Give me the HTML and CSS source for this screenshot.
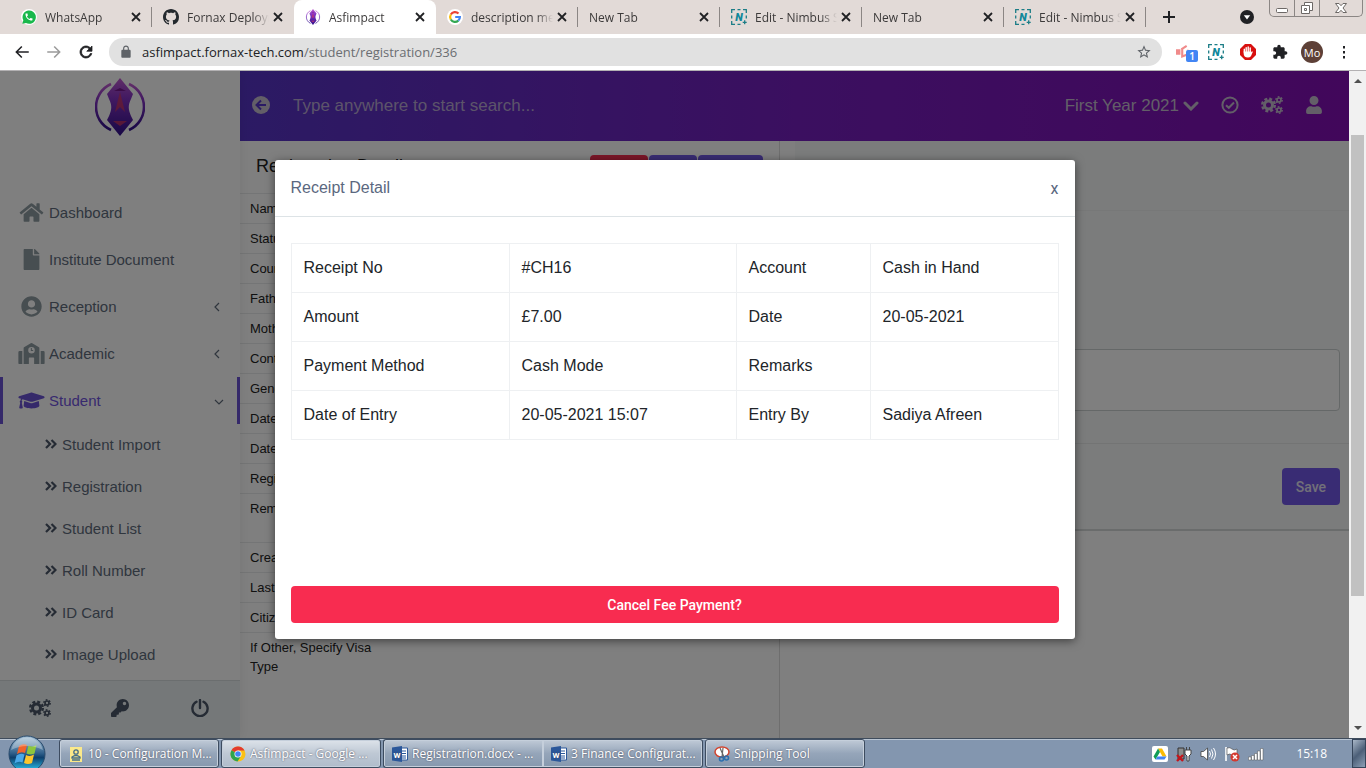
FILE: index.html
```
<!DOCTYPE html>
<html lang="en">
<head>
  <meta charset="UTF-8">
  <meta name="viewport" content="width=device-width, initial-scale=1.0">
  <title>Asfimpact</title>
  <link rel="stylesheet" href="styles.css">
</head>
<body>
  <!-- Shared icons -->
  <svg class="sprite" aria-hidden="true">
    <defs>
      <linearGradient id="logoFill" x1="0" y1="0" x2="0" y2="1">
        <stop offset="0" stop-color="#c05ad0"/>
        <stop offset="0.35" stop-color="#8434c4"/>
        <stop offset="1" stop-color="#30108c"/>
      </linearGradient>
      <linearGradient id="orbFill" x1="0" y1="0" x2="0" y2="1">
        <stop offset="0" stop-color="#a9c4d8"/>
        <stop offset="0.48" stop-color="#2f5f8a"/>
        <stop offset="0.6" stop-color="#0d3f6c"/>
        <stop offset="1" stop-color="#2fd0fa"/>
      </linearGradient>
    </defs>
    <symbol id="i-logo" viewBox="0 0 50 58">
      <path d="M25 0l13 16-2 5c-3 6-3 10 0 17l2 4-13 16-13-16 2-4c3-7 3-11 0-17l-2-5z" fill="url(#logoFill)"/>
      <path d="M25 14l5 20-5-5-5 5zM18 43h14l-7 5z" fill="#d2385f" opacity=".75"/>
      <path d="M19 13l6-3 6 3z" fill="#76198f"/>
      <path d="M16 6C-4 15-4 43 16 52M34 6c20 9 20 37 0 46" fill="none" stroke="url(#logoFill)" stroke-width="2.6"/>
    </symbol>
    <symbol id="i-close" viewBox="0 0 10 10"><path d="M1 1l8 8M9 1L1 9" stroke="currentColor" stroke-width="1.8"/></symbol>
    <symbol id="i-nimbus" viewBox="0 0 16 16">
      <path d="M.7 4V.7H4M6.5.7h3M12 .7h3.3V4M15.300 6.500v3M4 15.300H.7V12M.7 9.500v-3M6.500 15.300h3M13.700 11.300v4M11.700 13.300h4" fill="none" stroke="#1c7d86" stroke-width="1.3"/>
      <text x="8" y="12" text-anchor="middle" font-family="Roboto, sans-serif" font-size="11" font-weight="900" font-style="italic" fill="#11889a">N</text>
    </symbol>
    <symbol id="i-gears" viewBox="0 0 22 18">
      <g fill="none" stroke="currentColor">
        <circle cx="7.500" cy="9" r="4" stroke-width="3"/>
        <circle cx="7.500" cy="9" r="6.300" stroke-width="2.400" stroke-dasharray="2.900 2.048"/>
        <circle cx="18" cy="4" r="2" stroke-width="1.700"/>
        <circle cx="18" cy="4" r="3.200" stroke-width="1.400" stroke-dasharray="1.700 1.651"/>
        <circle cx="18" cy="14" r="2" stroke-width="1.700"/>
        <circle cx="18" cy="14" r="3.200" stroke-width="1.400" stroke-dasharray="1.700 1.651"/>
      </g>
    </symbol>
    <symbol id="i-dbl" viewBox="0 0 12 10"><path d="M1 1l4 4-4 4M6.500 1l4 4-4 4" fill="none" stroke="currentColor" stroke-width="2.200"/></symbol>
    <symbol id="i-left" viewBox="0 0 10 10"><path d="M7 1L3 5l4 4" fill="none" stroke="currentColor" stroke-width="1.200"/></symbol>
    <symbol id="i-word" viewBox="0 0 16 16">
      <path d="M8 2h7.500v12H8z" fill="#fff" stroke="#2b579a"/>
      <path d="M10 5h4M10 7.500h4M10 10h4M10 12h4" stroke="#2b579a"/>
      <path d="M0 1.500L10 0v16L0 14.500z" fill="#2b579a"/>
      <text x="5" y="11.500" text-anchor="middle" font-family="Roboto, sans-serif" font-size="8" font-weight="700" fill="#fff">W</text>
    </symbol>
  </svg>

  <!-- Browser tabs -->
  <header class="tabs">
    <div class="tab">
      <svg class="favicon" viewBox="0 0 24 24"><circle cx="12" cy="12" r="12" fill="#fff"/><path d="M2 22l1.500-5A10 10 0 1 1 7.500 21z" fill="#19b84c"/><path d="M6.620 10.790c1.440 2.830 3.760 5.140 6.590 6.590l2.200-2.200c.27-.27.67-.36 1.020-.24 1.120.37 2.330.57 3.570.57.55 0 1 .45 1 1V20c0 .55-.45 1-1 1-9.390 0-17-7.610-17-17 0-.55.45-1 1-1h3.500c.55 0 1 .45 1 1 0 1.250.2 2.450.57 3.570.11.35.03.74-.25 1.020l-2.200 2.200z" fill="#fff" transform="translate(5 5) scale(.58)"/></svg>
      <span class="tab-title">WhatsApp</span>
      <button class="tab-close" aria-label="Close"><svg><use href="#i-close"/></svg></button>
    </div>
    <div class="tab no-line">
      <svg class="favicon" viewBox="0 0 16 16"><path fill="#24292e" d="M8 0C3.580 0 0 3.580 0 8c0 3.540 2.290 6.530 5.470 7.590.4.07.55-.17.55-.38 0-.19-.01-.82-.01-1.490-2.010.37-2.530-.49-2.690-.94-.09-.23-.48-.94-.82-1.130-.28-.15-.68-.52-.01-.53.63-.01 1.080.58 1.230.82.72 1.210 1.870.87 2.330.66.07-.52.28-.87.51-1.070-1.780-.2-3.640-.89-3.640-3.950 0-.87.31-1.590.82-2.150-.08-.2-.36-1.020.08-2.120 0 0 .67-.21 2.200.82.64-.18 1.320-.27 2-.27s1.360.09 2 .27c1.530-1.040 2.200-.82 2.200-.82.44 1.100.16 1.920.08 2.120.51.56.82 1.270.82 2.150 0 3.070-1.870 3.750-3.650 3.950.29.25.54.73.54 1.480 0 1.070-.01 1.930-.01 2.200 0 .21.15.46.55.38A8.010 8.010 0 0 0 16 8c0-4.420-3.580-8-8-8z"/></svg>
      <span class="tab-title">Fornax Deployment</span>
      <button class="tab-close" aria-label="Close"><svg><use href="#i-close"/></svg></button>
    </div>
    <div class="tab active">
      <svg class="favicon"><use href="#i-logo"/></svg>
      <span class="tab-title">Asfimpact</span>
      <button class="tab-close" aria-label="Close"><svg><use href="#i-close"/></svg></button>
    </div>
    <div class="tab">
      <svg class="favicon" viewBox="0 0 16 16"><circle cx="8" cy="8" r="8" fill="#fff"/><g fill="none" stroke-width="2.200"><path d="M11.500 4.500A4.900 4.900 0 0 0 3.800 5.500" stroke="#ea4335"/><path d="M3.800 5.500a5 5 0 0 0 0 5" stroke="#fbbc05"/><path d="M3.800 10.500a4.900 4.900 0 0 0 7.500 1.100" stroke="#34a853"/><path d="M11.300 11.600A4.900 4.900 0 0 0 12.900 8H8.200" stroke="#4285f4"/></g></svg>
      <span class="tab-title">description meta</span>
      <button class="tab-close" aria-label="Close"><svg><use href="#i-close"/></svg></button>
    </div>
    <div class="tab">
      <span class="tab-title">New Tab</span>
      <button class="tab-close" aria-label="Close"><svg><use href="#i-close"/></svg></button>
    </div>
    <div class="tab">
      <svg class="favicon"><use href="#i-nimbus"/></svg>
      <span class="tab-title">Edit - Nimbus S</span>
      <button class="tab-close" aria-label="Close"><svg><use href="#i-close"/></svg></button>
    </div>
    <div class="tab">
      <span class="tab-title">New Tab</span>
      <button class="tab-close" aria-label="Close"><svg><use href="#i-close"/></svg></button>
    </div>
    <div class="tab">
      <svg class="favicon"><use href="#i-nimbus"/></svg>
      <span class="tab-title">Edit - Nimbus S</span>
      <button class="tab-close" aria-label="Close"><svg><use href="#i-close"/></svg></button>
    </div>
    <button class="new-tab" aria-label="New tab"><svg viewBox="0 0 12 12"><path d="M6 0v12M0 6h12" stroke="#202124" stroke-width="2"/></svg></button>
    <button class="tab-search" aria-label="Search tabs"><svg viewBox="0 0 14 14"><circle cx="7" cy="7" r="7" fill="#202124"/><path d="M3.800 5.200h6.400L7 9.500z" fill="#fff"/></svg></button>
    <div class="window-buttons">
      <button aria-label="Minimize"><svg viewBox="0 0 14 14"><rect x="1.500" y="7.500" width="11" height="4" rx="1" fill="#fff" stroke="#6c6866"/></svg></button>
      <button aria-label="Restore"><svg viewBox="0 0 14 14"><path d="M4.500 1.500h8v8h-3v3h-8v-8h3z" fill="#fff" stroke="#6c6866"/><path d="M4.500 4.500h5v5M4.500 7.500h2v2h-2z" fill="none" stroke="#6c6866"/></svg></button>
      <button class="win-close" aria-label="Close window"><svg viewBox="0 0 14 14"><path d="M1.500 2.500h3.500l2 2.200 2-2.200h3.500L9 7l3.500 4.500H9L7 9.300l-2 2.200H1.500L5 7z" fill="#fff" stroke="#6c6866"/></svg></button>
    </div>
  </header>

  <!-- Address bar -->
  <div class="toolbar">
    <button aria-label="Back"><svg viewBox="0 0 24 24"><path d="M21 11H6.800l5.700-5.600L11 4l-8 8 8 8 1.500-1.400L6.800 13H21z"/></svg></button>
    <button class="disabled" aria-label="Forward"><svg viewBox="0 0 24 24"><path d="M3 11h14.200l-5.700-5.600L13 4l8 8-8 8-1.500-1.400 5.700-5.600H3z"/></svg></button>
    <button aria-label="Reload"><svg viewBox="0 0 24 24"><path d="M17.650 6.350C16.200 4.900 14.210 4 12 4c-4.420 0-7.990 3.580-7.990 8s3.570 8 7.990 8c3.730 0 6.840-2.550 7.730-6h-2.080c-.82 2.330-3.040 4-5.650 4-3.310 0-6-2.690-6-6s2.690-6 6-6c1.660 0 3.140.69 4.220 1.780L13 11h7V4l-2.350 2.350z" stroke="#202124"/></svg></button>
    <div class="omnibox">
      <svg class="lock" viewBox="0 0 24 24"><path d="M18 8h-1V6c0-2.760-2.240-5-5-5S7 3.240 7 6v2H6c-1.100 0-2 .9-2 2v10c0 1.100.9 2 2 2h12c1.100 0 2-.9 2-2V10c0-1.100-.9-2-2-2zM9 6c0-1.660 1.340-3 3-3s3 1.340 3 3v2H9V6z"/></svg>
      <div class="url">asfimpact.fornax-tech.com<span>/student/registration/336</span></div>
      <button aria-label="Bookmark"><svg viewBox="0 0 24 24"><path d="M22 9.240l-7.190-.62L12 2 9.190 8.630 2 9.240l5.460 4.730L5.820 21 12 17.270 18.180 21l-1.630-7.030L22 9.240zM12 15.400l-3.760 2.270 1-4.280-3.320-2.880 4.380-.38L12 6.100l1.710 4.040 4.380.38-3.320 2.880 1 4.280L12 15.400z"/></svg></button>
    </div>
    <div class="extensions">
      <button class="ext" aria-label="Extension"><svg viewBox="0 0 18 18"><path d="M0 6h5v6H0zM13 6l5 3-5 3z" fill="#f08a8a"/><path d="M6 6l6-4M7 5v9l5-2" fill="none" stroke="#f08a8a" stroke-width="2.400"/></svg><span class="badge">1</span></button>
      <button class="ext" aria-label="Nimbus"><svg><use href="#i-nimbus"/></svg></button>
      <button class="ext" aria-label="AdBlock"><svg viewBox="0 0 16 16"><path d="M5 0h6l5 5v6l-5 5H5l-5-5V5z" fill="#d8100f"/><path d="M4.300 8V5.200M6.200 8V3.600M8.200 8V3M10.200 8V4" stroke="#fff" stroke-width="1.400" stroke-linecap="round"/><path d="M3.600 7.500h7.300v1l1-1.300 1 .6-2 4.400q-1 1.300-3 1.300-4.300 0-4.300-4.500z" fill="#fff"/></svg></button>
      <button class="ext" aria-label="Extensions"><svg viewBox="0 0 24 24"><path d="M20.500 11H19V7c0-1.100-.9-2-2-2h-4V3.500C13 2.120 11.880 1 10.500 1S8 2.120 8 3.500V5H4c-1.100 0-1.990.9-1.990 2v3.800H3.500c1.490 0 2.700 1.210 2.700 2.700s-1.210 2.700-2.700 2.700H2V20c0 1.100.9 2 2 2h3.800v-1.500c0-1.490 1.210-2.700 2.700-2.700 1.490 0 2.700 1.210 2.700 2.700V22H17c1.100 0 2-.9 2-2v-4h1.500c1.380 0 2.500-1.120 2.500-2.500S21.880 11 20.500 11z" fill="#202124"/></svg></button>
      <button class="avatar">Mo</button>
      <button class="ext" aria-label="Menu"><svg viewBox="0 0 16 16"><path d="M7 2h2v2.500H7zM7 7h2v2.500H7zM7 12h2v2.500H7z" fill="#202124"/></svg></button>
    </div>
  </div>

  <div class="viewport">
    <div class="app">
      <!-- Sidebar -->
      <aside class="sidebar">
        <div class="brand"><svg><use href="#i-logo"/></svg></div>
        <nav class="menu">
          <a href="#"><svg viewBox="0 0 576 512"><path d="M280.370 148.260L96 300.110V464a16 16 0 0 0 16 16l112.060-.29a16 16 0 0 0 15.920-16V368a16 16 0 0 1 16-16h64a16 16 0 0 1 16 16v95.640a16 16 0 0 0 16 16.050L464 480a16 16 0 0 0 16-16V300L295.670 148.260a12.190 12.190 0 0 0-15.300 0zM571.600 251.470L488 182.560V44.050a12 12 0 0 0-12-12h-56a12 12 0 0 0-12 12v72.610L318.470 43a48 48 0 0 0-61 0L4.340 251.470a12 12 0 0 0-1.600 16.900l25.500 31A12 12 0 0 0 45.150 301l235.220-193.740a12.190 12.190 0 0 1 15.300 0L530.900 301a12 12 0 0 0 16.900-1.600l25.500-31a12 12 0 0 0-1.700-16.930z"/></svg>Dashboard</a>
          <a href="#"><svg viewBox="0 0 384 512"><path d="M224 136V0H24C10.700 0 0 10.700 0 24v464c0 13.300 10.700 24 24 24h336c13.300 0 24-10.700 24-24V160H248c-13.200 0-24-10.800-24-24zm160-14.100v6.100H256V0h6.100c6.400 0 12.500 2.500 17 7l97.900 98c4.500 4.500 7 10.600 7 16.900z"/></svg>Institute Document</a>
          <a href="#"><svg viewBox="0 0 496 512"><path d="M248 8C111 8 0 119 0 256s111 248 248 248 248-111 248-248S385 8 248 8zm0 96c48.600 0 88 39.400 88 88s-39.400 88-88 88-88-39.400-88-88 39.400-88 88-88zm0 344c-58.700 0-111.300-26.600-146.500-68.200 18.800-35.400 55.600-59.800 98.500-59.800 2.400 0 4.800.4 7.100 1.100 13 4.200 26.600 6.900 40.900 6.900 14.300 0 28-2.700 40.900-6.900 2.300-.7 4.700-1.100 7.100-1.100 42.900 0 79.700 24.400 98.500 59.800C359.300 421.400 306.700 448 248 448z"/></svg>Reception<svg class="arrow"><use href="#i-left"/></svg></a>
          <a href="#"><svg viewBox="0 0 640 512"><path d="M0 224v272q0 16 16 16h80V192H32q-32 0-32 32zM544 192v320h80q16 0 16-16V224q0-32-32-32zM502 106L338 5q-18-10-36 0L138 106q-10 7-10 20v386h128V368q0-16 16-16h96q16 0 16 16v144h128V126q0-13-10-20zM320 256a80 80 0 1 1 0-160 80 80 0 0 1 0 160zM328 120h-24v72h56v-22h-32z" fill-rule="evenodd"/></svg>Academic<svg class="arrow"><use href="#i-left"/></svg></a>
          <a href="#" class="current"><svg viewBox="0 0 640 512"><path d="M622.340 153.200L343.400 67.500c-15.200-4.670-31.600-4.670-46.790 0L17.660 153.200c-23.540 7.230-23.540 38.360 0 45.590l48.630 14.940c-10.670 13.190-17.230 29.280-17.880 46.900C38.780 266.150 32 276.110 32 288c0 10.780 5.680 19.850 13.860 25.650L20.330 428.530C18.110 438.520 25.710 448 35.940 448h56.110c10.240 0 17.840-9.480 15.620-19.470L82.140 313.650C90.320 307.850 96 298.780 96 288c0-11.570-6.470-21.250-15.660-26.870.76-15.020 8.440-28.300 20.690-36.720L296.600 284.500c9.060 2.780 26.440 6.250 46.790 0l278.950-85.700c23.550-7.240 23.550-38.360 0-45.600zM352.790 315.090c-28.530 8.760-52.840 3.920-65.590 0l-145.020-44.550L128 384c0 35.350 85.960 64 192 64s192-28.650 192-64l-14.180-113.470-145.030 44.560z"/></svg>Student<svg class="arrow" viewBox="0 0 10 10"><path d="M1 4l4 4 4-4" fill="none" stroke="currentColor" stroke-width="1.200"/></svg></a>
        </nav>
        <nav class="submenu">
          <a href="#"><svg><use href="#i-dbl"/></svg>Student Import</a>
          <a href="#"><svg><use href="#i-dbl"/></svg>Registration</a>
          <a href="#"><svg><use href="#i-dbl"/></svg>Student List</a>
          <a href="#"><svg><use href="#i-dbl"/></svg>Roll Number</a>
          <a href="#"><svg><use href="#i-dbl"/></svg>ID Card</a>
          <a href="#"><svg><use href="#i-dbl"/></svg>Image Upload</a>
        </nav>
        <div class="sidebar-footer">
          <button class="gears" aria-label="Settings"><svg><use href="#i-gears"/></svg></button>
          <button aria-label="Change password"><svg viewBox="0 0 512 512"><path fill="currentColor" d="M512 176.001C512 273.203 433.202 352 336 352c-11.220 0-22.190-1.062-32.827-3.069l-24.012 27.014A23.999 23.999 0 0 1 261.223 384H224v40c0 13.255-10.745 24-24 24h-40v40c0 13.255-10.745 24-24 24H24c-13.255 0-24-10.745-24-24v-78.059c0-6.365 2.529-12.470 7.029-16.971l161.802-161.802C163.108 213.814 160 195.271 160 176 160 78.798 238.797.001 335.999 0 433.488-.001 512 78.511 512 176.001zM336 128c0 26.510 21.490 48 48 48s48-21.490 48-48-21.490-48-48-48-48 21.490-48 48z"/></svg></button>
          <button aria-label="Log out"><svg viewBox="0 0 18 18"><path d="M5.500 2.800a7.600 7.600 0 1 0 7 0M9 1v8" fill="none" stroke="currentColor" stroke-width="2.400" stroke-linecap="round"/></svg></button>
        </div>
      </aside>

      <main class="main">
        <div class="topbar">
          <button class="back" aria-label="Collapse menu"><svg viewBox="0 0 18 18"><circle cx="9" cy="9" r="9" fill="currentColor"/><path d="M14 9H5M9 4.500L4.500 9 9 13.500" fill="none" stroke="#5735c8" stroke-width="2"/></svg></button>
          <input type="text" aria-label="Search" placeholder="Type anywhere to start search...">
          <button class="year">First Year 2021<svg viewBox="0 0 16 10"><path d="M2 2l6 6 6-6" fill="none" stroke="currentColor" stroke-width="3" stroke-linecap="round"/></svg></button>
          <button class="top-icon" aria-label="Tasks"><svg viewBox="0 0 18 18"><circle cx="9" cy="9" r="7.600" fill="none" stroke="currentColor" stroke-width="2"/><path d="M5 9.200l2.800 2.600L13 6.500" fill="none" stroke="currentColor" stroke-width="2"/></svg></button>
          <button class="top-icon gears" aria-label="Settings"><svg><use href="#i-gears"/></svg></button>
          <button class="top-icon" aria-label="Account"><svg viewBox="0 0 448 512"><path fill="currentColor" d="M224 256c70.700 0 128-57.300 128-128S294.700 0 224 0 96 57.300 96 128s57.300 128 128 128zm89.600 32h-16.700c-22.200 10.200-46.900 16-72.900 16s-50.600-5.800-72.900-16h-16.700C60.200 288 0 348.200 0 422.400V464c0 26.500 21.500 48 48 48h352c26.500 0 48-21.500 48-48v-41.600c0-74.200-60.200-134.400-134.400-134.400z"/></svg></button>
        </div>

        <div class="content">
          <section class="details">
            <div class="details-head">
              <h2>Registration Details</h2>
              <div class="actions">
                <button class="btn danger">Delete</button>
                <button class="btn">Print</button>
                <button class="btn">Receipt</button>
              </div>
            </div>
            <table class="info">
              <tr><th>Name</th><td></td></tr>
              <tr><th>Status</th><td></td></tr>
              <tr><th>Course</th><td></td></tr>
              <tr><th>Father Name</th><td></td></tr>
              <tr><th>Mother Name</th><td></td></tr>
              <tr><th>Contact No</th><td></td></tr>
              <tr><th>Gender</th><td></td></tr>
              <tr><th>Date of Birth</th><td></td></tr>
              <tr><th>Date of Entry</th><td></td></tr>
              <tr><th>Registration No</th><td></td></tr>
              <tr><th>Remarks<br>&nbsp;</th><td></td></tr>
              <tr><th>Created By</th><td></td></tr>
              <tr><th>Last Updated</th><td></td></tr>
              <tr><th>Citizenship</th><td></td></tr>
              <tr><th>If Other, Specify Visa Type</th><td></td></tr>
            </table>
          </section>
          <section class="followup">
            <div class="panel">
              <div class="panel-head"></div>
              <div class="panel-body"><textarea aria-label="Remarks"></textarea></div>
              <div class="panel-foot"><button class="btn save">Save</button></div>
            </div>
          </section>
        </div>
      </main>

      <!-- Receipt modal -->
      <div class="overlay">
        <div class="modal" role="dialog" aria-labelledby="modal-title">
          <div class="modal-head">
            <h3 id="modal-title">Receipt Detail</h3>
            <button class="modal-close">x</button>
          </div>
          <div class="modal-body">
            <table class="receipt">
              <colgroup><col class="c1"><col class="c2"><col class="c3"><col class="c4"></colgroup>
              <tr><td>Receipt No</td><td>#CH16</td><td>Account</td><td>Cash in Hand</td></tr>
              <tr><td>Amount</td><td>£7.00</td><td>Date</td><td>20-05-2021</td></tr>
              <tr><td>Payment Method</td><td>Cash Mode</td><td>Remarks</td><td></td></tr>
              <tr><td>Date of Entry</td><td>20-05-2021 15:07</td><td>Entry By</td><td>Sadiya Afreen</td></tr>
            </table>
            <button class="btn danger cancel">Cancel Fee Payment?</button>
          </div>
        </div>
      </div>
    </div>

    <div class="scrollbar">
      <svg viewBox="0 0 8 5"><path d="M0 5l4-4 4 4z"/></svg>
      <div class="track"><div class="thumb"></div></div>
      <svg viewBox="0 0 8 5"><path d="M0 0l4 4 4-4z"/></svg>
    </div>
  </div>

  <!-- Taskbar -->
  <footer class="taskbar">
    <button class="start" aria-label="Start"><svg viewBox="0 0 38 38"><circle cx="19" cy="19" r="18" fill="url(#orbFill)" stroke="#28496a"/><path d="M11 11q4-3 8-1l-2 8q-4-2-8 1z" fill="#f0642c"/><path d="M20.500 10.500q4 2 8-.5l-2 8.500q-4 2-8 0z" fill="#8cc63e"/><path d="M8.500 20.500q4-3 8-1l-2 8q-4-2-8 1z" fill="#4aa8e8"/><path d="M18 20q4 2 8-.5l-2 8.500q-4 2-8 0z" fill="#fcc52c"/><path d="M3 15a16.500 16.500 0 0 1 32 0q-16-8-32 0z" fill="#fff" opacity=".3"/></svg></button>
    <button class="task"><svg viewBox="0 0 16 16"><path d="M2 1h12v15H2z" fill="#fbe98a"/><circle cx="8" cy="6" r="2.200" fill="none" stroke="#456d88" stroke-width="1.300"/><path d="M4 11q4-3 8 0v1H4zM4 14h8" fill="none" stroke="#456d88" stroke-width="1.300"/></svg><span>10 - Configuration M...</span></button>
    <button class="task lit"><svg viewBox="0 0 16 16"><circle cx="8" cy="8" r="7.500" fill="#fbc116"/><path d="M8 8L1.500 4.200A7.500 7.500 0 0 1 14.500 4.500H8z" fill="#e33b2e"/><path d="M1.500 4.200A7.500 7.500 0 0 0 7.500 15.500L11 10z" fill="#2da44e"/><circle cx="8" cy="8" r="3.500" fill="#fff"/><circle cx="8" cy="8" r="2.800" fill="#4285f4"/></svg><span>Asfimpact - Google ...</span></button>
    <div class="task-group">
      <button class="task"><svg><use href="#i-word"/></svg><span>Registratrion.docx - ...</span></button>
      <button class="task"><svg><use href="#i-word"/></svg><span>3 Finance Configurat...</span></button>
    </div>
    <button class="task"><svg viewBox="0 0 16 16"><ellipse cx="8" cy="6" rx="7" ry="5" fill="#fff" stroke="#d2452f" stroke-width="1.500"/><path d="M6 2l4 9M9 2l-1 9" stroke="#666" stroke-width="1.200"/><circle cx="7.500" cy="13" r="2" fill="none" stroke="#2b6fae" stroke-width="1.600"/><circle cx="12.500" cy="12" r="2" fill="none" stroke="#2b6fae" stroke-width="1.600"/></svg><span>Snipping Tool</span></button>
    <div class="tray">
      <svg viewBox="0 0 16 16"><rect width="16" height="16" rx="2" fill="#fff"/><path d="M6 2.500h4l4.500 8h-4z" fill="#fbbc04"/><path d="M6 2.500l2 3.500-4.500 7.500-2-3z" fill="#0f9d58"/><path d="M5.500 10.500h9l-2 3h-9z" fill="#4285f4"/></svg>
      <svg viewBox="0 0 16 16"><path d="M2 2h6v11H2z" fill="#8d8d8d" stroke="#333"/><path d="M9 4h6v4l-2 2v5h-2v-5L9 8zM10.500 1v3M13.500 1v3" fill="#fff" stroke="#444"/><path d="M1 9l6 6M7 9l-6 6" stroke="#c4151c" stroke-width="2.400"/></svg>
      <svg viewBox="0 0 16 16"><path d="M1 5.500h2.500L7.500 2v12l-4-3.500H1z" fill="#fff" stroke="#444" stroke-width=".8"/><path d="M9.500 5q2 3 0 6M11.500 3.500q3 4.500 0 9M13.500 2q4 6 0 12" fill="none" stroke="#fff"/></svg>
      <svg viewBox="0 0 16 16"><path d="M2 1v14" stroke="#fff" stroke-width="1.600"/><path d="M3 2q3-1 5 1t5 0v6q-3 2-5 0t-5 0z" fill="#fff" stroke="#444" stroke-width=".6"/><circle cx="11" cy="11" r="4.500" fill="#d43a30"/><path d="M9 9l4 4M13 9l-4 4" stroke="#fff" stroke-width="1.500"/></svg>
      <svg viewBox="0 0 16 16"><path d="M.5 11h2.500v3H.5zM3.500 9.500H6V14H3.500zM6.500 7.500H9V14H6.500zM9.500 5H12v9H9.500zM12.500 2.500H15V14h-2.500z" fill="#fff" stroke="#555" stroke-width=".5"/></svg>
    </div>
    <span class="clock">15:18</span>
    <button class="show-desktop" aria-label="Show desktop"></button>
  </footer>
</body>
</html>
```
FILE: styles.css
```
* {
  box-sizing: border-box;
}
body {
  margin: 0;
  height: 100vh;
  display: flex;
  flex-direction: column;
  overflow: hidden;
  font-family: "Liberation Sans", Arial, sans-serif;
  background: #fff;
}
button {
  border: none;
  background: none;
  padding: 0;
  font-family: inherit;
  color: inherit;
  cursor: pointer;
}
a {
  color: inherit;
  text-decoration: none;
}
svg {
  display: block;
  flex: none;
}
.sprite {
  position: absolute;
  width: 0;
  height: 0;
}

/* Browser tabs */
.tabs {
  display: flex;
  align-items: center;
  height: 34px;
  flex: none;
  padding-left: 10px;
  background: #e2dad7;
  font-family: "Open Sans", "Noto Sans", sans-serif;
  font-size: 12px;
  color: #3c3a3a;
}
.tab {
  position: relative;
  display: flex;
  align-items: center;
  flex: 0 1 142px;
  min-width: 0;
  height: 34px;
  padding: 0 11px 0 11px;
}
.tab::after {
  content: "";
  position: absolute;
  right: 0;
  top: 7px;
  width: 1px;
  height: 20px;
  background: #8b8684;
}
.tab.active {
  background: #fff;
  border-radius: 8px 8px 0 0;
}
.tab.active::after, .tab.no-line::after {
  display: none;
}
.favicon {
  width: 16px;
  height: 16px;
  margin-right: 8px;
}
.tab-title {
  flex: 1;
  overflow: hidden;
  white-space: nowrap;
  margin-right: 4px;
  -webkit-mask-image: linear-gradient(to right, #000 80%, transparent);
  mask-image: linear-gradient(to right, #000 80%, transparent);
}
.tab-close svg {
  width: 10px;
  height: 10px;
  color: #202124;
}
.new-tab {
  margin-left: 17px;
}
.new-tab svg {
  width: 12px;
  height: 12px;
}
.tab-search {
  margin-left: auto;
}
.tab-search svg {
  width: 14px;
  height: 14px;
}
.window-buttons {
  display: flex;
  align-self: flex-start;
  margin: 0 3px 0 15px;
  border: 1px solid #8b8684;
  border-top: none;
  border-radius: 0 0 5px 5px;
}
.window-buttons button {
  width: 25px;
  height: 16px;
  display: flex;
  justify-content: center;
  align-items: center;
  border-right: 1px solid #8b8684;
}
.window-buttons .win-close {
  width: 42px;
  border-right: none;
}
.window-buttons svg {
  width: 14px;
  height: 14px;
}

/* Address bar */
.toolbar {
  display: flex;
  align-items: center;
  height: 37px;
  flex: none;
  padding: 0 14px 0 13px;
  border-bottom: 1px solid #b3b1b3;
  font-family: "Open Sans", "Noto Sans", sans-serif;
}
.toolbar svg {
  width: 18px;
  height: 18px;
  fill: #202124;
}
.toolbar > button {
  margin-right: 14px;
}
.toolbar > .disabled svg {
  fill: #9b9b9b;
}
.omnibox {
  display: flex;
  align-items: center;
  flex: 1;
  height: 28px;
  padding: 0 10px;
  border-radius: 14px;
  background: #e1e1e1;
}
.omnibox svg {
  width: 16px;
  height: 16px;
  fill: #5f6368;
}
.omnibox .lock {
  width: 14px;
  height: 14px;
}
.url {
  flex: 1;
  margin-left: 9px;
  font-size: 13px;
  color: #202124;
}
.url span {
  color: #6b6e72;
}
.extensions {
  display: flex;
  align-items: center;
  gap: 16px;
  margin-left: 14px;
}
.ext {
  position: relative;
}
.extensions .ext svg {
  width: 16px;
  height: 16px;
}
.badge {
  position: absolute;
  left: 10px;
  top: 6px;
  width: 12px;
  height: 12px;
  border-radius: 2px;
  background: #4285f4;
  color: #fff;
  font-size: 10px;
  font-weight: 600;
  line-height: 12px;
}
.avatar {
  width: 22px;
  height: 22px;
  margin: 0 -3px;
  border-radius: 50%;
  background: #5d4037;
  color: #fff;
  font-size: 11px;
}

/* Page area */
.viewport {
  display: flex;
  flex: 1;
  min-height: 0;
}
.app {
  position: relative;
  display: flex;
  flex: 1;
  min-width: 0;
  overflow: hidden;
}
.scrollbar {
  display: flex;
  flex-direction: column;
  align-items: center;
  width: 17px;
  padding: 7px 2px;
  background: #f1f1f1;
}
.scrollbar svg {
  width: 8px;
  height: 5px;
  fill: #505050;
}
.track {
  flex: 1;
  width: 100%;
  padding-top: 52px;
}
.thumb {
  height: 78%;
  background: #c1c1c1;
}

/* Sidebar */
.sidebar {
  display: flex;
  flex-direction: column;
  width: 240px;
  flex: none;
  background: #fff;
  color: #606c7c;
  font-size: 15px;
  z-index: 1;
  box-shadow: 0 0 12px rgba(0, 0, 0, 0.08);
}
.brand {
  display: flex;
  justify-content: center;
  height: 118px;
  padding-top: 7px;
}
.brand svg {
  width: 50px;
  height: 58px;
}
.menu a {
  display: flex;
  align-items: center;
  gap: 4px;
  height: 47px;
  padding: 0 18px;
  border-left: 0 solid #6a52d5;
}
.menu svg {
  width: 27px;
  height: 21px;
  fill: #8f9ca2;
}
.menu .arrow {
  width: 10px;
  height: 10px;
  margin-left: auto;
  fill: none;
}
.menu .current {
  color: #7054de;
  padding: 0 13px 0 15px;
  border-left-width: 3px;
  border-right: 3px solid #6a52d5;
}
.menu .current svg {
  fill: #6a52d5;
}
.menu .current .arrow {
  color: #606c7c;
}
.submenu {
  flex: 1;
  min-height: 0;
}
.submenu a {
  display: flex;
  align-items: center;
  gap: 5px;
  height: 42px;
  padding: 0 0 2px 45px;
}
.submenu svg {
  width: 12px;
  height: 10px;
  color: #4b5668;
}
.sidebar-footer {
  display: flex;
  align-items: center;
  height: 58px;
  flex: none;
  padding-bottom: 4px;
  border-top: 1px solid #d6dcde;
  background: #eaf1f3;
  color: #4b5668;
}
.sidebar-footer button {
  flex: 1;
  display: flex;
  justify-content: center;
}
.sidebar-footer svg {
  width: 18px;
  height: 18px;
}
.sidebar-footer .gears svg {
  width: 22px;
}

/* Top bar */
.main {
  display: flex;
  flex-direction: column;
  flex: 1;
  min-width: 0;
}
.topbar {
  display: flex;
  align-items: center;
  height: 70px;
  flex: none;
  padding: 0 26px 2px 12px;
  background: linear-gradient(90deg, #5735c8, #761fc0 50%, #840eb6);
  color: #c6bfd0;
  font-size: 17px;
}
.topbar svg {
  height: 18px;
}
.back svg {
  width: 18px;
}
.topbar input {
  flex: 1;
  min-width: 0;
  padding: 2px 0 0;
  margin-left: 23px;
  border: none;
  outline: none;
  background: none;
  font-family: inherit;
  font-size: 17px;
}
.topbar input::placeholder {
  color: #b9a9d4;
  opacity: 1;
}
.year {
  display: flex;
  align-items: center;
  gap: 4px;
  padding-top: 2px;
  font-size: 17px;
}
.topbar .year svg {
  width: 16px;
  height: 10px;
}
.top-icon {
  margin-left: 22px;
}
.top-icon svg {
  width: 18px;
}
.top-icon.gears svg {
  width: 22px;
}

/* Registration details */
.content {
  display: flex;
  flex: 1;
  min-height: 0;
}
.details {
  width: 540px;
  flex: none;
  border-right: 1px solid #dcdcdc;
}
.details-head {
  display: flex;
  justify-content: space-between;
  height: 52px;
  padding: 14px 16px 0;
}
.details-head h2 {
  margin: 0;
  font-size: 18px;
  font-weight: normal;
  line-height: 22px;
  color: #222;
}
.actions {
  display: flex;
  gap: 1px;
}
.btn {
  height: 37px;
  padding: 0 14px;
  border-radius: 4px;
  background: #7259e8;
  color: #fff;
  font-family: Roboto, sans-serif;
  font-size: 14px;
  font-weight: 500;
}
.actions .btn {
  padding: 0 9px;
}
.btn.danger {
  background: #f82c50;
}
.info {
  width: 100%;
  border-collapse: collapse;
  font-size: 13px;
  line-height: 19px;
  color: #222;
}
.info th, .info td {
  padding: 5px 10px;
  border-top: 1px solid #e9ebec;
  text-align: left;
  font-weight: normal;
}
.info th {
  width: 155px;
}

/* Follow up panel */
.followup {
  flex: 1;
  padding-left: 15px;
}
.panel {
  border-bottom: 2px solid #d5d9d8;
  background: #f6f9f8;
}
.panel-head {
  height: 70px;
  border-bottom: 1px solid #eef1f0;
}
.panel-body {
  padding: 138px 9px 32px;
}
.panel-body textarea {
  display: block;
  width: 100%;
  height: 62px;
  border: 1px solid #cbd0d0;
  border-radius: 4px;
  resize: none;
  background: #fff;
}
.panel-foot {
  display: flex;
  justify-content: flex-end;
  padding: 24px 9px;
  border-top: 1px solid #e6e9e8;
}
.save {
  color: #e4e0f2;
}

/* Receipt modal */
.overlay {
  position: absolute;
  inset: 0;
  z-index: 2;
  display: flex;
  justify-content: center;
  align-items: flex-start;
  padding-top: 89px;
  background: rgba(0, 0, 0, 0.5);
}
.modal {
  width: 800px;
  border-radius: 3px;
  background: #fff;
  box-shadow: 0 2px 10px rgba(0, 0, 0, 0.5);
}
.modal-head {
  display: flex;
  justify-content: space-between;
  align-items: center;
  height: 57px;
  padding: 0 16px;
  border-bottom: 1px solid #dde3e6;
  color: #5b6880;
}
.modal-head h3 {
  margin: 0;
  font-size: 16px;
  font-weight: normal;
}
.modal-close {
  font-family: Roboto, sans-serif;
  font-size: 16px;
}
.modal-body {
  padding: 26px 16px 16px;
}
.receipt {
  width: 100%;
  table-layout: fixed;
  border-collapse: collapse;
  margin-bottom: 146px;
  font-size: 16px;
  line-height: 24px;
  color: #212529;
}
.receipt td {
  height: 49px;
  padding: 12px;
  border: 1px solid #eef0f2;
}
.c1 {
  width: 218px;
}
.c2 {
  width: 227px;
}
.c3 {
  width: 134px;
}
.cancel {
  display: block;
  width: 100%;
}

/* Taskbar */
.taskbar {
  display: flex;
  align-items: center;
  height: 30px;
  flex: none;
  border-top: 1px solid #3f4c5c;
  box-shadow: inset 0 1px 0 #b9c5d3;
  background: #8396af;
  color: #fff;
  font-family: "Open Sans", "Noto Sans", sans-serif;
  font-size: 12px;
}
.start {
  margin: 0 13px 0 8px;
  z-index: 3;
}
.start svg {
  width: 38px;
  height: 38px;
}
.task {
  display: flex;
  align-items: center;
  gap: 4px;
  flex: 0 1 160px;
  min-width: 0;
  height: 29px;
  margin-right: 2px;
  padding: 0 2px 0 8px;
  border: 1px solid #3d4c60;
  border-radius: 3px;
  background: linear-gradient(#c0cad7, #95a5b9 50%, #8698ae);
  box-shadow: inset 0 0 0 1px #c5cfdb;
  font-size: 12px;
  text-shadow: 0 0 2px #445;
}
.task.lit {
  background: linear-gradient(#dde3ea, #bec8d4 50%, #b0bccb);
}
.task span {
  white-space: nowrap;
  overflow: hidden;
}
.task svg {
  width: 16px;
  height: 16px;
}
.task-group {
  display: flex;
  flex: 0 1 320px;
  min-width: 0;
  margin-right: 2px;
}
.task-group .task {
  flex: 1;
  margin-right: 0;
}
.task-group .task:first-child {
  border-right: none;
  border-radius: 3px 0 0 3px;
}
.task-group .task:last-child {
  border-left: none;
  border-radius: 0 3px 3px 0;
}
.tray {
  display: flex;
  gap: 8px;
  margin-left: auto;
}
.tray svg {
  width: 16px;
  height: 16px;
}
.clock {
  margin: 0 25px 0 32px;
}
.show-desktop {
  width: 14px;
  height: 29px;
  border: 1px solid #35455a;
  background: linear-gradient(135deg, #a9b7c8, #4c5f78 50%, #8da0b6);
}
```
